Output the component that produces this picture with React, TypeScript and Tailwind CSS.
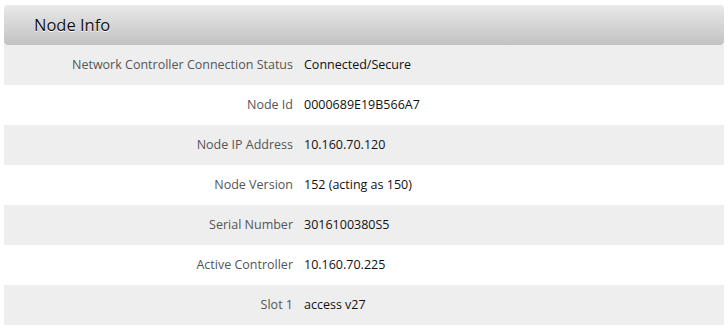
const rows = [
  { label: "Network Controller Connection Status", value: "Connected/Secure" },
  { label: "Node Id", value: "0000689E19B566A7" },
  { label: "Node IP Address", value: "10.160.70.120" },
  { label: "Node Version", value: "152 (acting as 150)" },
  { label: "Serial Number", value: "3016100380S5" },
  { label: "Active Controller", value: "10.160.70.225" },
  { label: "Slot 1", value: "access v27" },
];

export default function App() {
  return (
    <div className="min-h-[329px] bg-white px-1 pt-[5px] font-['Open_Sans',sans-serif]">
      {/* panel header */}
      <div className="flex h-10 items-center rounded-[4px] bg-gradient-to-b from-[#e9e9e9] to-[#c2c2c2] pl-[30px]">
        <h2 className="text-[16.5px] text-[#111] [text-shadow:0_1px_0_#fff]">Node Info</h2>
      </div>

      <div className="flex flex-col">
        {rows.map((row, i) => (
          <div
            key={row.label}
            className={`grid h-10 grid-cols-[289px_1fr] items-center gap-[11px] text-[12.5px] ${
              i % 2 === 0 ? "bg-[#eeeeee]" : "bg-white"
            }`}
          >
            <span className="text-right text-[#555]">{row.label}</span>
            <span className="text-[#111]">{row.value}</span>
          </div>
        ))}
      </div>
    </div>
  );
}
